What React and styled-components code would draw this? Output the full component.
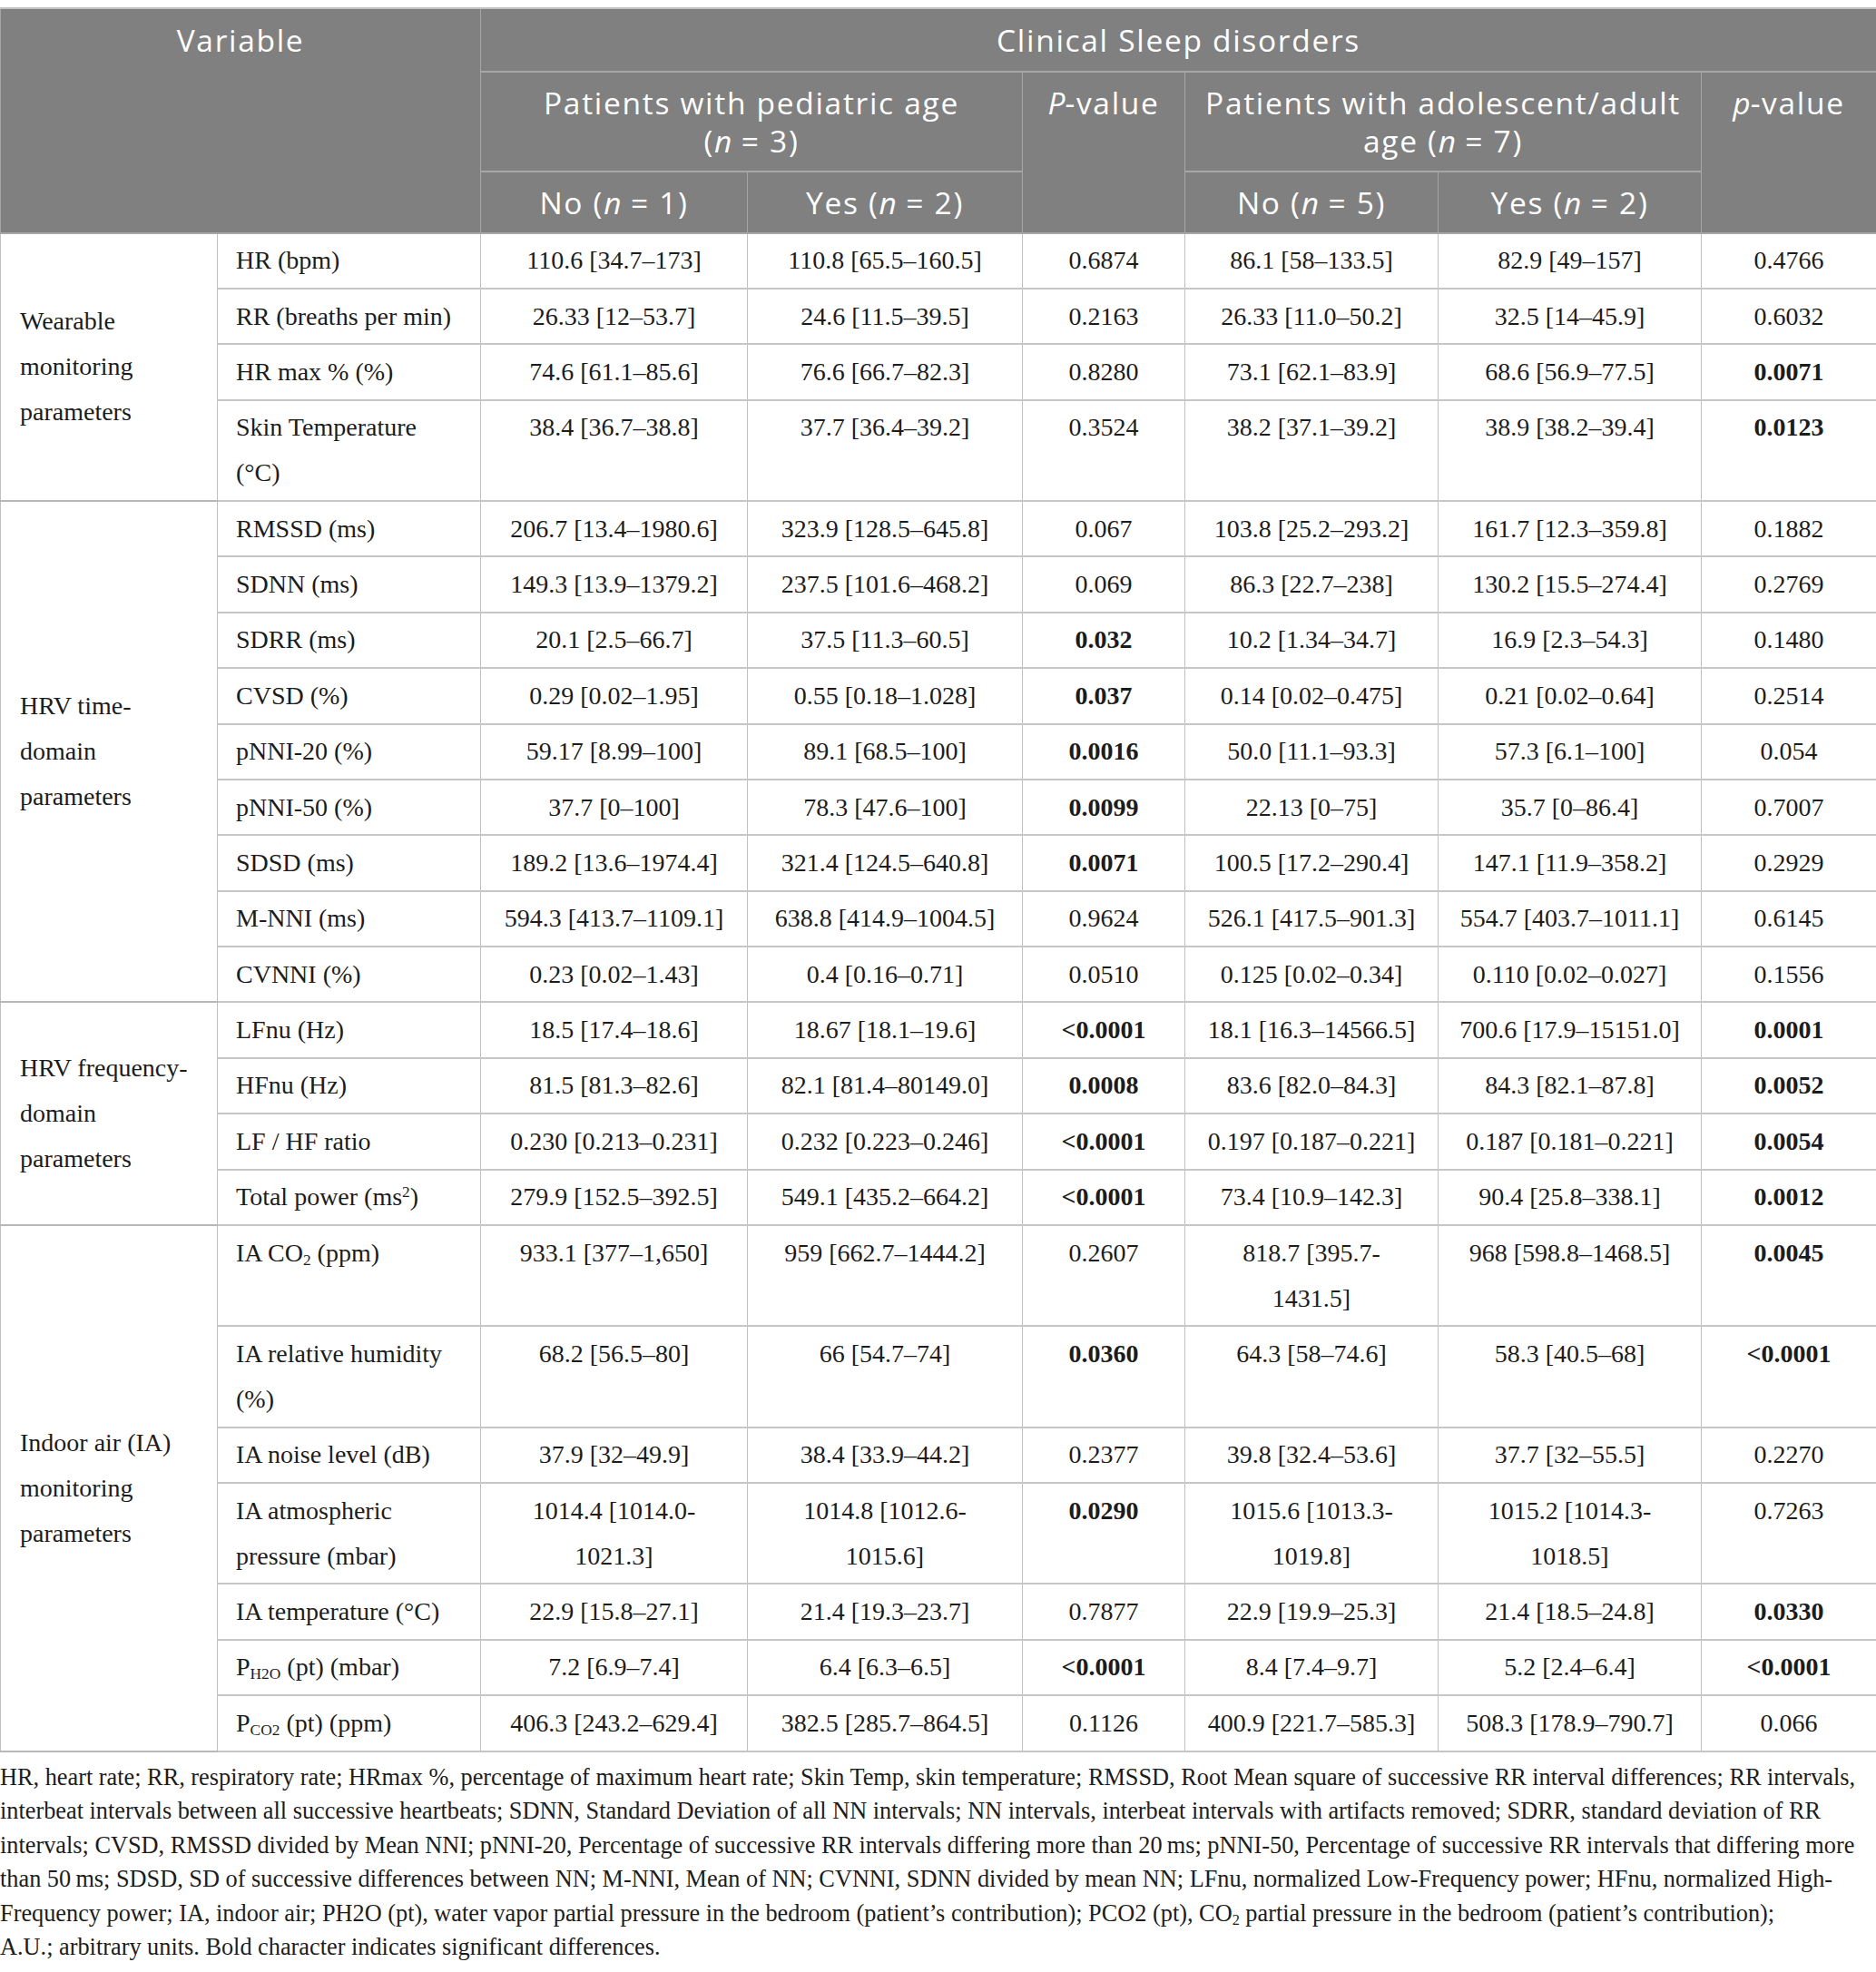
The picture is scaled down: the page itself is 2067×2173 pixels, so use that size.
import React from "react";
import styled, { createGlobalStyle } from "styled-components";

const Global = createGlobalStyle`
  html, body { margin: 0; padding: 0; background: #ffffff; }
  body { font-family: "Liberation Serif", "Times New Roman", serif; }
`;

const Page = styled.div`
  width: 2067px;
  padding-top: 8px;
  box-sizing: border-box;
`;

const Table = styled.table`
  width: 2067px;
  table-layout: fixed;
  border-collapse: collapse;
  font-family: "Liberation Serif", "Times New Roman", serif;
  font-size: 28px;
  color: #1c1c1c;
`;

const Col = styled.col`
  width: ${(p) => p.$w}px;
`;

const Th = styled.th`
  background: #808080;
  color: #ffffff;
  font-family: "Open Sans", "Noto Sans", sans-serif;
  font-weight: 400;
  font-size: 33.5px;
  letter-spacing: 1.7px;
  line-height: 42px;
  padding: ${(p) => (p.$top ? "13px 10px 12.5px" : "12px 10px")};
  text-align: center;
  vertical-align: top;
  border: 2px solid #a6a6a6;
  border-top-color: ${(p) => (p.$top ? "#c2c2c2" : "#a6a6a6")};
  border-left-width: 1px;
  border-right-width: 1px;
  white-space: nowrap;

  i {
    font-style: italic;
    letter-spacing: 0;
  }
`;

const Cell = styled.td`
  border-top: 2px solid #c6c6c6;
  border-bottom: 2px solid #c6c6c6;
  border-left: 1px solid #c0c0c0;
  border-right: 1px solid #c0c0c0;
  line-height: 50px;
  padding: 4.7px 14px;
  vertical-align: top;
`;

const GroupCell = styled(Cell)`
  vertical-align: middle;
  text-align: left;
  padding: 0 8px 0 21px;
  border-top-color: #b8b8b8;
  border-bottom-color: #b8b8b8;
`;

const VarCell = styled(Cell)`
  text-align: left;
  padding-left: 20px;
  padding-right: 6px;
`;

const ValueCell = styled(Cell)`
  text-align: center;
  font-weight: ${(p) => (p.$bold ? 700 : 400)};
  white-space: nowrap;
`;

const Sub = styled.sub`
  font-size: 0.62em;
  line-height: 0;
  vertical-align: -0.22em;
`;

const Sup = styled.sup`
  font-size: 0.62em;
  line-height: 0;
  vertical-align: 0.5em;
`;

const Caption = styled.p`
  margin: 9px 0 0;
  font-family: "Liberation Serif", "Times New Roman", serif;
  font-size: 26.3px;
  line-height: 37.6px;
  color: #1c1c1c;
`;

const widths = [239, 290, 294, 303, 179, 279, 290, 193];

const groups = [
  {
    label: ["Wearable", "monitoring", "parameters"],
    rows: [
      ["HR (bpm)", "110.6 [34.7–173]", "110.8 [65.5–160.5]", "0.6874", "86.1 [58–133.5]", "82.9 [49–157]", "0.4766"],
      ["RR (breaths per min)", "26.33 [12–53.7]", "24.6 [11.5–39.5]", "0.2163", "26.33 [11.0–50.2]", "32.5 [14–45.9]", "0.6032"],
      ["HR max % (%)", "74.6 [61.1–85.6]", "76.6 [66.7–82.3]", "0.8280", "73.1 [62.1–83.9]", "68.6 [56.9–77.5]", "*0.0071"],
      [["Skin Temperature", <br key="b" />, "(°C)"], "38.4 [36.7–38.8]", "37.7 [36.4–39.2]", "0.3524", "38.2 [37.1–39.2]", "38.9 [38.2–39.4]", "*0.0123"],
    ],
  },
  {
    label: ["HRV time-", "domain", "parameters"],
    rows: [
      ["RMSSD (ms)", "206.7 [13.4–1980.6]", "323.9 [128.5–645.8]", "0.067", "103.8 [25.2–293.2]", "161.7 [12.3–359.8]", "0.1882"],
      ["SDNN (ms)", "149.3 [13.9–1379.2]", "237.5 [101.6–468.2]", "0.069", "86.3 [22.7–238]", "130.2 [15.5–274.4]", "0.2769"],
      ["SDRR (ms)", "20.1 [2.5–66.7]", "37.5 [11.3–60.5]", "*0.032", "10.2 [1.34–34.7]", "16.9 [2.3–54.3]", "0.1480"],
      ["CVSD (%)", "0.29 [0.02–1.95]", "0.55 [0.18–1.028]", "*0.037", "0.14 [0.02–0.475]", "0.21 [0.02–0.64]", "0.2514"],
      ["pNNI-20 (%)", "59.17 [8.99–100]", "89.1 [68.5–100]", "*0.0016", "50.0 [11.1–93.3]", "57.3 [6.1–100]", "0.054"],
      ["pNNI-50 (%)", "37.7 [0–100]", "78.3 [47.6–100]", "*0.0099", "22.13 [0–75]", "35.7 [0–86.4]", "0.7007"],
      ["SDSD (ms)", "189.2 [13.6–1974.4]", "321.4 [124.5–640.8]", "*0.0071", "100.5 [17.2–290.4]", "147.1 [11.9–358.2]", "0.2929"],
      ["M-NNI (ms)", "594.3 [413.7–1109.1]", "638.8 [414.9–1004.5]", "0.9624", "526.1 [417.5–901.3]", "554.7 [403.7–1011.1]", "0.6145"],
      ["CVNNI (%)", "0.23 [0.02–1.43]", "0.4 [0.16–0.71]", "0.0510", "0.125 [0.02–0.34]", "0.110 [0.02–0.027]", "0.1556"],
    ],
  },
  {
    label: ["HRV frequency-", "domain", "parameters"],
    rows: [
      ["LFnu (Hz)", "18.5 [17.4–18.6]", "18.67 [18.1–19.6]", "*<0.0001", "18.1 [16.3–14566.5]", "700.6 [17.9–15151.0]", "*0.0001"],
      ["HFnu (Hz)", "81.5 [81.3–82.6]", "82.1 [81.4–80149.0]", "*0.0008", "83.6 [82.0–84.3]", "84.3 [82.1–87.8]", "*0.0052"],
      ["LF / HF ratio", "0.230 [0.213–0.231]", "0.232 [0.223–0.246]", "*<0.0001", "0.197 [0.187–0.221]", "0.187 [0.181–0.221]", "*0.0054"],
      [["Total power (ms", <Sup key="s">2</Sup>, ")"], "279.9 [152.5–392.5]", "549.1 [435.2–664.2]", "*<0.0001", "73.4 [10.9–142.3]", "90.4 [25.8–338.1]", "*0.0012"],
    ],
  },
  {
    label: ["Indoor air (IA)", "monitoring", "parameters"],
    rows: [
      [["IA CO", <Sub key="s">2</Sub>, " (ppm)"], "933.1 [377–1,650]", "959 [662.7–1444.2]", "0.2607", "818.7 [395.7-\n1431.5]", "968 [598.8–1468.5]", "*0.0045"],
      [["IA relative humidity", <br key="b" />, "(%)"], "68.2 [56.5–80]", "66 [54.7–74]", "*0.0360", "64.3 [58–74.6]", "58.3 [40.5–68]", "*<0.0001"],
      ["IA noise level (dB)", "37.9 [32–49.9]", "38.4 [33.9–44.2]", "0.2377", "39.8 [32.4–53.6]", "37.7 [32–55.5]", "0.2270"],
      [["IA atmospheric", <br key="b" />, "pressure (mbar)"], "1014.4 [1014.0-\n1021.3]", "1014.8 [1012.6-\n1015.6]", "*0.0290", "1015.6 [1013.3-\n1019.8]", "1015.2 [1014.3-\n1018.5]", "0.7263"],
      ["IA temperature (°C)", "22.9 [15.8–27.1]", "21.4 [19.3–23.7]", "0.7877", "22.9 [19.9–25.3]", "21.4 [18.5–24.8]", "*0.0330"],
      [["P", <Sub key="s">H2O</Sub>, " (pt) (mbar)"], "7.2 [6.9–7.4]", "6.4 [6.3–6.5]", "*<0.0001", "8.4 [7.4–9.7]", "5.2 [2.4–6.4]", "*<0.0001"],
      [["P", <Sub key="s">CO2</Sub>, " (pt) (ppm)"], "406.3 [243.2–629.4]", "382.5 [285.7–864.5]", "0.1126", "400.9 [221.7–585.3]", "508.3 [178.9–790.7]", "0.066"],
    ],
  },
];

const captionLines = [
  "HR, heart rate; RR, respiratory rate; HRmax %, percentage of maximum heart rate; Skin Temp, skin temperature; RMSSD, Root Mean square of successive RR interval differences; RR intervals,",
  "interbeat intervals between all successive heartbeats; SDNN, Standard Deviation of all NN intervals; NN intervals, interbeat intervals with artifacts removed; SDRR, standard deviation of RR",
  "intervals; CVSD, RMSSD divided by Mean NNI; pNNI-20, Percentage of successive RR intervals differing more than 20\u202Fms; pNNI-50, Percentage of successive RR intervals that differing more",
  "than 50\u202Fms; SDSD, SD of successive differences between NN; M-NNI, Mean of NN; CVNNI, SDNN divided by mean NN; LFnu, normalized Low-Frequency power; HFnu, normalized High-",
  ["Frequency power; IA, indoor air; PH2O (pt), water vapor partial pressure in the bedroom (patient’s contribution); PCO2 (pt), CO", <Sub key="s">2</Sub>, " partial pressure in the bedroom (patient’s contribution);"],
  "A.U.; arbitrary units. Bold character indicates significant differences.",
];

function Lines({ lines }) {
  return lines.map((l, i) => (
    <React.Fragment key={i}>
      {i > 0 && <br />}
      {l}
    </React.Fragment>
  ));
}

function Value({ text }) {
  const bold = text.startsWith("*");
  const clean = bold ? text.slice(1) : text;
  return (
    <ValueCell $bold={bold}>
      <Lines lines={clean.split("\n")} />
    </ValueCell>
  );
}

export default function App() {
  return (
    <Page>
      <Global />
      <Table>
        <colgroup>
          {widths.map((w, i) => (
            <Col key={i} $w={w} />
          ))}
        </colgroup>
        <thead>
          <tr>
            <Th $top rowSpan={3} colSpan={2}>Variable</Th>
            <Th $top colSpan={6}>Clinical Sleep disorders</Th>
          </tr>
          <tr>
            <Th colSpan={2}>
              Patients with pediatric age
              <br />(<i>n</i> = 3)
            </Th>
            <Th rowSpan={2}>
              <i>P</i>-value
            </Th>
            <Th colSpan={2}>
              Patients with adolescent/adult
              <br />
              age (<i>n</i> = 7)
            </Th>
            <Th rowSpan={2}>
              <i>p</i>-value
            </Th>
          </tr>
          <tr>
            <Th>No (<i>n</i> = 1)</Th>
            <Th>Yes (<i>n</i> = 2)</Th>
            <Th>No (<i>n</i> = 5)</Th>
            <Th>Yes (<i>n</i> = 2)</Th>
          </tr>
        </thead>
        <tbody>
          {groups.map((g, gi) =>
            g.rows.map((r, ri) => (
              <tr key={`${gi}-${ri}`}>
                {ri === 0 && (
                  <GroupCell rowSpan={g.rows.length}>
                    <Lines lines={g.label} />
                  </GroupCell>
                )}
                <VarCell>{r[0]}</VarCell>
                {r.slice(1).map((v, vi) => (
                  <Value key={vi} text={v} />
                ))}
              </tr>
            ))
          )}
        </tbody>
      </Table>
      <Caption>
        <Lines lines={captionLines} />
      </Caption>
    </Page>
  );
}
